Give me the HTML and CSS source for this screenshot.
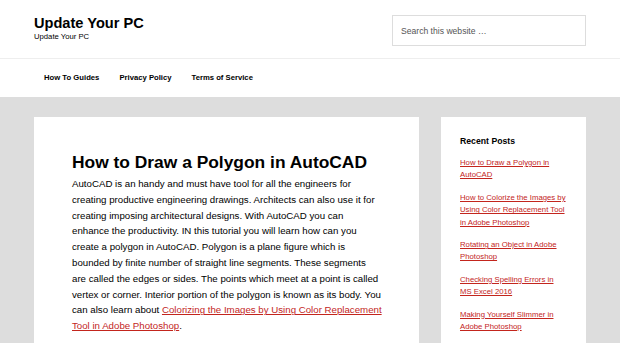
FILE: index.html
```html
<!DOCTYPE html>
<html>
<head>
	<title>Update Your PC</title>
	<meta charset=utf-8>
	<meta name=viewport content="width=device-width, initial-scale=1">
	<link rel="stylesheet" href="styles.css">
</head>
<body>
	<header class="site-header">
		<div class="wrap">
			<div class="title-area">
				<p class="site-title">Update Your PC</p>
				<p class="site-description">Update Your PC</p>
			</div>
			<form class="search-form">
				<input type="search" placeholder="Search this website …">
			</form>
		</div>
	</header>

	<nav class="nav-primary">
		<ul class="menu wrap">
			<li><a href="#">How To Guides</a></li>
			<li><a href="#">Privacy Policy</a></li>
			<li><a href="#">Terms of Service</a></li>
		</ul>
	</nav>

	<div class="site-inner wrap">
		<main class="content">
			<article class="entry">
				<h1 class="entry-title">How to Draw a Polygon in AutoCAD</h1>
				<p>AutoCAD is an handy and must have tool for all the engineers for creating productive engineering drawings. Architects can also use it for creating imposing architectural designs. With AutoCAD you can enhance the productivity. IN this tutorial you will learn how can you create a polygon in AutoCAD. Polygon is a plane figure which is bounded by finite number of straight line segments. These segments are called the edges or sides. The points which meet at a point is called vertex or corner. Interior portion of the polygon is known as its body. You can also learn about <a href="#">Colorizing the Images by Using Color Replacement Tool in Adobe Photoshop</a>.</p>
			</article>
		</main>

		<aside class="sidebar">
			<section class="widget">
				<h4 class="widget-title">Recent Posts</h4>
				<ul>
					<li><a href="#">How to Draw a Polygon in AutoCAD</a></li>
					<li><a href="#">How to Colorize the Images by Using Color Replacement Tool in Adobe Photoshop</a></li>
					<li><a href="#">Rotating an Object in Adobe Photoshop</a></li>
					<li><a href="#">Checking Spelling Errors in MS Excel 2016</a></li>
					<li><a href="#">Making Yourself Slimmer in Adobe Photoshop</a></li>
				</ul>
			</section>
		</aside>
	</div>
</body>
</html>
```

FILE: styles.css
```css
body {
	margin: 0;
	background: #ddd;
	color: #000;
	font-family: "Liberation Sans", Arial, sans-serif;
}
a {
	color: #c3251d;
}
p, ul, h1, h4 {
	margin: 0;
	padding: 0;
}
ul {
	list-style: none;
}
.wrap {
	width: 552px;
	margin: 0 auto;
}

/* header */
.site-header {
	background: #fff;
	border-bottom: 1px solid #eee;
	height: 58px;
}
.site-header .wrap {
	display: flex;
	justify-content: space-between;
}
.title-area {
	padding-top: 15px;
}
.site-title {
	font-size: 14.6px;
	line-height: 17px;
	font-weight: bold;
}
.site-description {
	font-size: 7.7px;
	line-height: 10px;
}
.search-form {
	padding-top: 15px;
}
.search-form input {
	box-sizing: border-box;
	width: 194px;
	height: 31px;
	border: 1px solid #ddd;
	padding: 0 8px;
	font-family: inherit;
	font-size: 8.6px;
	color: #333;
	outline: none;
}
.search-form input::placeholder {
	color: #555;
}

/* nav */
.nav-primary {
	background: #fff;
	height: 38px;
}
.menu {
	display: flex;
}
.menu a {
	display: block;
	padding: 0 10px;
	line-height: 38px;
	font-size: 7.7px;
	font-weight: bold;
	color: #000;
	text-decoration: none;
}

/* content */
.site-inner {
	display: flex;
	gap: 22px;
	align-items: flex-start;
	padding-top: 20px;
}
.content {
	width: 385px;
	background: #fff;
}
.entry {
	padding: 35px 0 40px 38px;
}
.entry-title {
	font-size: 17.4px;
	line-height: 21px;
	margin-bottom: 3px;
}
.entry p {
	width: 310.1px;
	font-size: 9.7px;
	line-height: 15.8px;
}

/* sidebar */
.sidebar {
	width: 145px;
	background: #fff;
}
.widget {
	padding: 19px 0 20px 19px;
}
.widget-title {
	font-size: 8.7px;
	line-height: 11px;
	margin-bottom: 10px;
}
.widget ul {
	width: 106.3px;
}
.widget li {
	font-size: 7.75px;
	line-height: 12.4px;
	margin-bottom: 10px;
}
```
